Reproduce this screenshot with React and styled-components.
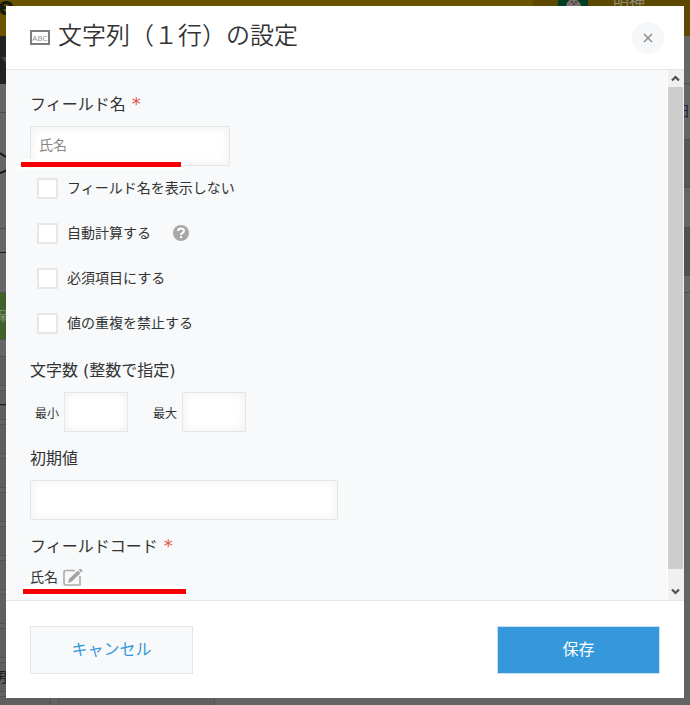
import React from "react";
import styled, { createGlobalStyle } from "styled-components";

const GlobalStyle = createGlobalStyle`
  *, *::before, *::after { box-sizing: border-box; }
  body {
    margin: 0;
    color: #333;
    font-family: "DejaVu Sans", "Noto Sans CJK JP", sans-serif;
    font-size: 14px;
  }
  button, input { font-family: inherit; }
`;

/* ---------- dimmed page behind the dialog ---------- */

const Screen = styled.div`
  position: relative;
  min-height: 100vh;
  overflow: hidden;
  background: #636363;
`;

const Backdrop = styled.div`
  position: absolute;
  inset: 0;
  display: flex;
  flex-direction: column;
  overflow: hidden;
  user-select: none;
`;

const TopBar = styled.div`
  display: flex;
  flex: none;
  height: 36px;
  background: #6b5400;
  justify-content: space-between;
  overflow: hidden;
`;

const Brand = styled.span`
  color: #1c1a14;
  font: bold 24px/14px "DejaVu Sans", sans-serif;
  margin-left: -2px;
  height: 14px;
`;

const UserArea = styled.div`
  display: flex;
  align-items: flex-start;
  gap: 25px;
  width: 157px;
  padding-left: 25px;
  background: #5c4800;
  color: #8f8874;
  font-size: 16px;
  line-height: 4px;
`;

const Workspace = styled.div`
  display: flex;
  flex: 1;
  justify-content: space-between;
  min-height: 0;
`;

const FormArea = styled.div`
  display: flex;
  flex-direction: column;
  width: 260px;
`;

const NavStrip = styled.div`
  flex: none;
  height: 48px;
  padding-top: 21px;
  background: #222;
`;

const PageBand = styled.div`
  flex: none;
  height: ${(p) => p.$height}px;
  background: ${(p) => p.$color || "#666"};
  border-bottom: 1px solid ${(p) => p.$line || "#4d4d4d"};
  color: ${(p) => p.$ink || "#222"};
  line-height: ${(p) => p.$height - 1}px;
  font-size: 14px;
  overflow: hidden;
  white-space: nowrap;
  text-indent: -6px;
`;

const FieldRow = styled.div`
  display: flex;
  flex: none;
  gap: 7px;
  height: 30px;
  margin-bottom: 4px;
  line-height: 28px;
`;

const FieldCell = styled.div`
  width: ${(p) => p.$width}px;
  border: 1px solid #525252;
  border-left-width: ${(p) => (p.$open ? 0 : 1)}px;
  background: #5f5f5f;
  color: #1d1d1d;
  overflow: hidden;
  text-indent: -6px;
`;

const SideArea = styled.div`
  width: 8px;
`;

function PageBehind() {
  const marks = ["", "ー", "", "", "", "", "", "", "", "男", ""];
  return (
    <Backdrop aria-hidden="true">
      <TopBar>
        <Brand>e</Brand>
        <UserArea>
          <svg width="30" height="6" viewBox="0 0 30 6">
            <path d="M0 0h30v6H0z" fill="#003d25" />
            <path d="M8 6Q9 1 12 0h7q3 2 4 6z" fill="#7d706a" />
            <path d="M13 2h2M17 2h2M15 4h2" stroke="#2b1d19" />
          </svg>
          <span>明神</span>
        </UserArea>
      </TopBar>
      <Workspace>
        <FormArea>
          <NavStrip>
            <svg width="6" height="6" viewBox="0 0 6 6" display="block">
              <path d="M1 0h5v6z" fill="#444" />
            </svg>
          </NavStrip>
          <PageBand $height={29} />
          <PageBand $height={116} $line="#484848">
            <svg width="8" height="64" viewBox="0 0 8 64" display="block">
              <path d="M0 40l6 4M0 60q4-1 7-3" stroke="#151515" strokeWidth="2" fill="none" />
            </svg>
          </PageBand>
          <PageBand $height={24} $line="#1a1a1a" />
          <PageBand $height={40} $line="#555" />
          <PageBand $height={47} $color="#3f5f2b" $ink="#7d8f72" $line="#555">保</PageBand>
          <PageBand $height={16} $line="#636363" />
          {marks.map((mark, i) => (
            <FieldRow key={i}>
              <FieldCell $open $width={51}>{mark}</FieldCell>
              <FieldCell $width={157} />
            </FieldRow>
          ))}
        </FormArea>
        <SideArea>
          <PageBand $height={48} />
          <PageBand $height={56} $ink="#1b2736">日</PageBand>
          <PageBand $height={48} $color="#565656" />
          <PageBand $height={40} />
          <PageBand $height={48} $color="#515151" />
          <PageBand $height={17} />
        </SideArea>
      </Workspace>
    </Backdrop>
  );
}

/* ---------- dialog ---------- */

const Overlay = styled.div`
  position: relative;
  display: flex;
  min-height: 100vh;
  padding: 6px 6px 7px;
`;

const Dialog = styled.form`
  display: flex;
  flex: 1;
  flex-direction: column;
  min-width: 0;
  background: #fff;
`;

const Header = styled.header`
  display: flex;
  align-items: center;
  gap: 8px;
  height: 64px;
  padding: 0 20px 0 24px;
  border-bottom: 1px solid #e3e7e8;
`;

const TypeIcon = styled.span`
  display: flex;
  align-items: center;
  justify-content: center;
  width: 20px;
  height: 15px;
  border: 2px solid #7d7d7d;
  color: #8c8c8c;
  font: 8px/11px "Open Sans", sans-serif;
`;

const Title = styled.h1`
  flex: 1;
  margin: 0 0 4px;
  font-size: 24px;
  font-weight: 350;
  line-height: 32px;
`;

const CloseButton = styled.button`
  display: grid;
  place-items: center;
  width: 32px;
  height: 32px;
  padding: 0;
  border: 0;
  border-radius: 50%;
  background: #f5f7f9;
`;

const Body = styled.div`
  display: flex;
  flex: 1;
  background: #f7f9fa;
`;

const Fields = styled.div`
  flex: 1;
  padding: 23px 24px 11px;
`;

const Group = styled.section`
  position: relative;
  margin-bottom: ${(p) => p.$space || 0}px;
`;

const Label = styled.label`
  display: flex;
  gap: 6px;
  margin-bottom: 9px;
  font-size: 16px;
  line-height: 24px;
`;

const Required = styled.span`
  color: #e0574a;
  font-size: 18px;
  line-height: 22px;
`;

const TextBox = styled.input`
  display: block;
  width: ${(p) => p.$width}px;
  max-width: 100%;
  height: 40px;
  padding: 0 8px 4px;
  border: 1px solid #e3e7e8;
  border-radius: 0;
  outline: 0;
  background: #fff;
  box-shadow: inset 2px 2px 8px #f4f4f4, inset -2px -2px 8px #f4f4f4;
  color: #888;
  font-size: 14px;
`;

const Marker = styled.span`
  position: absolute;
  left: ${(p) => p.$left}px;
  bottom: ${(p) => p.$bottom}px;
  width: ${(p) => p.$width}px;
  height: 11px;
  border: 3px solid #fcfdfd;
  background: #f90000;
`;

const Options = styled.div`
  display: flex;
  flex-direction: column;
  gap: 25px;
  margin-bottom: 26px;
  padding-left: 7px;
`;

const OptionRow = styled.div`
  display: flex;
  align-items: center;
  gap: 22px;
  height: 20px;
`;

const OptionLabel = styled.label`
  display: flex;
  align-items: center;
  gap: 9px;
  line-height: 20px;
`;

const CheckBox = styled.input`
  appearance: none;
  width: 21px;
  height: 21px;
  margin: 0;
  border: 2px solid #e5e7e9;
  background: #fff;
`;

const HelpButton = styled.button`
  display: grid;
  place-items: center;
  width: 16px;
  height: 16px;
  padding: 0;
  border: 0;
  border-radius: 50%;
  background: #a8a8a8;
`;

const LimitRow = styled.div`
  display: flex;
  gap: 25px;
  padding-left: 5px;
`;

const LimitLabel = styled.label`
  display: flex;
  align-items: center;
  gap: 5px;
  font-size: 12px;
`;

const CodeRow = styled.div`
  display: flex;
  align-items: center;
  gap: 5px;
  height: 20px;
  padding-bottom: 4px;
`;

const IconButton = styled.button`
  padding: 0;
  border: 0;
  background: none;
  height: 20px;
`;

const ScrollTrack = styled.div`
  display: flex;
  flex-direction: column;
  width: 17px;
  padding-right: 1px;
  border-left: 1px solid #fff;
  background: #f0f0f0;
`;

const ScrollArrow = styled.button`
  display: grid;
  place-items: center;
  width: 15px;
  height: 17px;
  padding: 0;
  border: 0;
  background: none;
`;

const ScrollThumb = styled.div`
  flex: 1;
  margin-bottom: 14px;
  background: #cdcdcd;
`;

const Footer = styled.footer`
  display: flex;
  justify-content: space-between;
  padding: 25px 24px 24px;
  border-top: 1px solid #e3e7e8;
`;

const ActionButton = styled.button`
  width: 163px;
  height: 48px;
  padding: 0 0 4px;
  border: 1px solid ${(p) => (p.$primary ? "#c4e0f2" : "#e3e7e8")};
  background: ${(p) => (p.$primary ? "#3498db" : "#f7f9fa")};
  color: ${(p) => (p.$primary ? "#fff" : "#3498db")};
  font-size: 16px;
`;

const Chevron = ({ down }) => (
  <svg width="9" height="7" viewBox="0 0 9 7" fill="none" stroke="#505050" strokeWidth="2.2">
    <path d={down ? "M1 1.5l3.5 3.5L8 1.5" : "M1 5.5L4.5 2 8 5.5"} />
  </svg>
);

const EditIcon = () => (
  <svg width="20" height="20" viewBox="0 0 20 20" fill="none" display="block">
    <path d="M12 4.500H3Q1 4.500 1 6.500V17Q1 19 3 19H17V10" stroke="#aaa" strokeWidth="1.6" />
    <path d="M5 17l1-4 9-8.500 2.500 2.700-8.800 8.300z" fill="#a3a3a3" />
    <path d="M15.800 3.800l1.500-1.400 2.400 2.600-1.500 1.400z" fill="#a3a3a3" />
  </svg>
);

const OPTIONS = [
  { id: "hide", text: "フィールド名を表示しない" },
  { id: "calc", text: "自動計算する", help: true },
  { id: "required", text: "必須項目にする" },
  { id: "unique", text: "値の重複を禁止する" },
];

export default function App() {
  return (
    <Screen>
      <GlobalStyle />
      <PageBehind />
      <Overlay>
        <Dialog role="dialog" aria-labelledby="title" onSubmit={(e) => e.preventDefault()}>
          <Header>
            <TypeIcon>ABC</TypeIcon>
            <Title id="title">文字列（１行）の設定</Title>
            <CloseButton type="button" aria-label="閉じる">
              <svg width="10" height="10" viewBox="0 0 10 10" stroke="#888" strokeWidth="1.4">
                <path d="M1 1l8 8M9 1L1 9" />
              </svg>
            </CloseButton>
          </Header>
          <Body>
            <Fields>
              <Group $space={12}>
                <Label htmlFor="name">
                  フィールド名<Required>*</Required>
                </Label>
                <TextBox id="name" $width={200} defaultValue="氏名" />
                <Marker $left={-12} $bottom={-4} $width={166} />
              </Group>
              <Options>
                {OPTIONS.map((o) => (
                  <OptionRow key={o.id}>
                    <OptionLabel htmlFor={o.id}>
                      <CheckBox type="checkbox" id={o.id} />
                      {o.text}
                    </OptionLabel>
                    {o.help && (
                      <HelpButton type="button" aria-label="ヘルプ">
                        <svg width="10" height="12" viewBox="0 0 10 12" fill="none">
                          <path d="M2 4Q2 1.500 5 1.500T8 4Q8 5.200 6.500 6T5 8" stroke="#fff" strokeWidth="2" />
                          <path d="M4 9h2v2H4z" fill="#fff" />
                        </svg>
                      </HelpButton>
                    )}
                  </OptionRow>
                ))}
              </Options>
              <Group $space={15}>
                <Label as="div">文字数 (整数で指定)</Label>
                <LimitRow>
                  <LimitLabel>
                    最小
                    <TextBox $width={64} />
                  </LimitLabel>
                  <LimitLabel>
                    最大
                    <TextBox $width={64} />
                  </LimitLabel>
                </LimitRow>
              </Group>
              <Group $space={15}>
                <Label htmlFor="initial">初期値</Label>
                <TextBox id="initial" $width={308} />
              </Group>
              <Group>
                <Label as="div">
                  フィールドコード<Required>*</Required>
                </Label>
                <CodeRow>
                  氏名
                  <IconButton type="button" aria-label="編集">
                    <EditIcon />
                  </IconButton>
                </CodeRow>
                <Marker $left={-10} $bottom={-9} $width={169} />
              </Group>
            </Fields>
            <ScrollTrack>
              <ScrollArrow type="button" aria-label="上へ">
                <Chevron />
              </ScrollArrow>
              <ScrollThumb />
              <ScrollArrow type="button" aria-label="下へ">
                <Chevron down />
              </ScrollArrow>
            </ScrollTrack>
          </Body>
          <Footer>
            <ActionButton type="button">キャンセル</ActionButton>
            <ActionButton type="submit" $primary>保存</ActionButton>
          </Footer>
        </Dialog>
      </Overlay>
    </Screen>
  );
}
